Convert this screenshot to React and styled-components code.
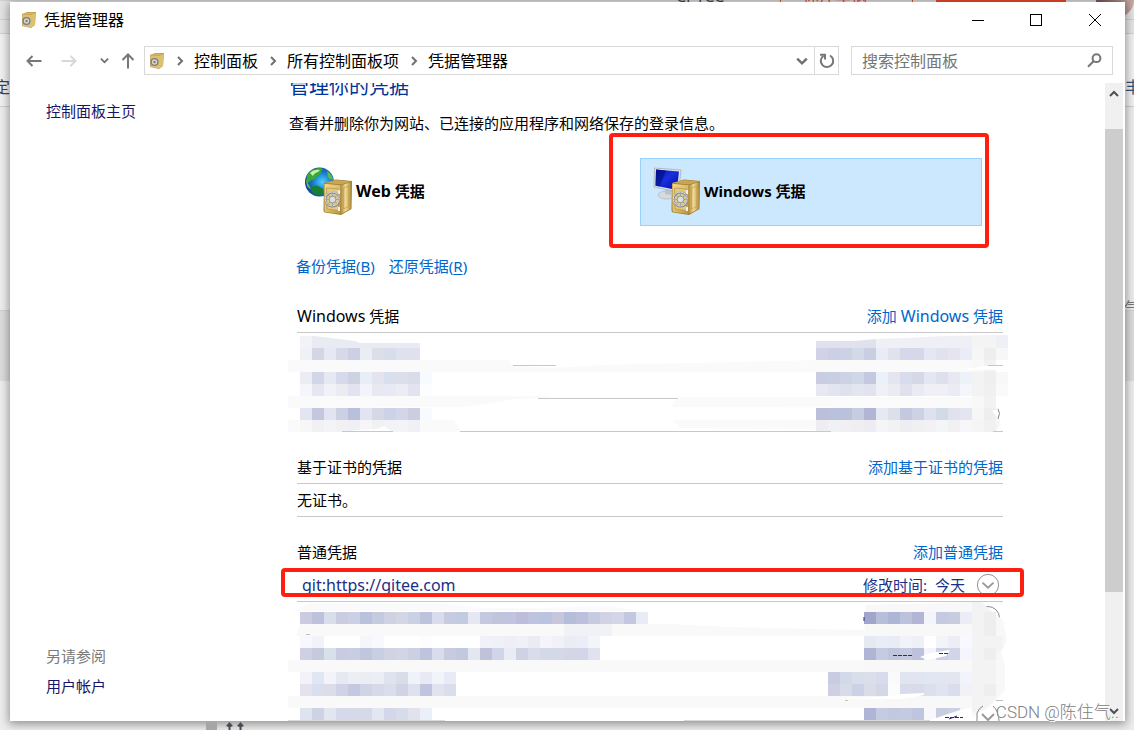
import React from 'react';
import styled, { createGlobalStyle, css } from 'styled-components';

const GlobalStyle = createGlobalStyle`
  * { box-sizing: border-box; }
  body {
    margin: 0;
    font-family: "Noto Sans", "Noto Sans CJK SC", sans-serif;
    font-size: 15px;
    line-height: 24px;
    color: #000;
  }
  button, input { font: inherit; color: inherit; }
  a { color: inherit; text-decoration: none; }
`;

/* ---------- page behind the window ---------- */

const Desktop = styled.div`
  position: relative;
  display: flex;
  height: 100vh;
  min-height: 400px;
  padding: 2px 9px 9px 10px;
  overflow: hidden;
  background: #ededed;
`;

const Behind = styled.div`
  position: absolute;
  inset: 0;
  overflow: hidden;
`;

const Strip = styled.div`
  position: absolute;
  left: 0;
  right: 0;
  top: ${(p) => p.$top}px;
  height: ${(p) => p.$height}px;
  background: ${(p) => p.$fill};
  border-top: 1px solid #d0d0d0;
`;

const BehindText = styled.span`
  position: absolute;
  top: ${(p) => p.$top}px;
  ${(p) => (p.$right !== undefined ? `right: ${p.$right}px` : `left: ${p.$left}px`)};
  color: ${(p) => p.$color || '#444'};
  font-size: 16px;
  white-space: nowrap;
`;

const Piece = styled.div`
  position: absolute;
  top: ${(p) => p.$top}px;
  left: ${(p) => p.$left}px;
  width: ${(p) => p.$width}px;
  height: ${(p) => p.$height}px;
  background: ${(p) => p.$fill};
`;

const FootMarks = styled.svg`
  position: absolute;
  left: 206px;
  bottom: 0;
`;

const Avatar = styled.div`
  position: absolute;
  top: -18px;
  right: 0;
  width: 38px;
  height: 36px;
  border-radius: 50%;
  background: linear-gradient(90deg, #6b5050, #c9aaa2);
`;

/* ---------- window ---------- */

const Window = styled.main`
  position: relative;
  flex: 1;
  min-width: 0;
  display: flex;
  flex-direction: column;
  background: #fff;
  box-shadow: 0 2px 9px 1px rgba(0, 0, 0, 0.4);
`;

const TitleBar = styled.header`
  flex: none;
  display: flex;
  align-items: center;
  height: 36px;
  padding-left: 11px;
  gap: 7px;
`;

const Title = styled.h1`
  flex: 1;
  margin: 0;
  font-size: 16px;
  font-weight: 400;
`;

const Plain = styled.button`
  display: flex;
  align-items: center;
  justify-content: center;
  padding: 0;
  border: 0;
  background: none;
  width: ${(p) => p.$width || 20}px;
  height: 27px;
`;

const WindowButtons = styled.div`
  display: flex;
`;

const NavBar = styled.nav`
  flex: none;
  display: flex;
  align-items: center;
  height: 45px;
  padding: 0 12px 0 14px;
  color: #707070;
`;

const Arrows = styled.div`
  display: flex;
  align-items: center;
  width: 120px;
  justify-content: space-between;
  padding-right: 6px;
`;

const AddressBar = styled.div`
  flex: 1;
  display: flex;
  align-items: center;
  height: 29px;
  border: 1px solid #d9d9d9;
  padding-left: 4px;
`;

const Crumbs = styled.ol`
  flex: 1;
  display: flex;
  margin: 0;
  padding: 0;
  list-style: none;
  font-size: 16px;
  color: #000;
`;

const Crumb = styled.li`
  display: flex;
  align-items: center;
  gap: 9px;
  padding-left: 10px;
`;

const Refresh = styled(Plain)`
  border-left: 1px solid #d9d9d9;
`;

const SearchBox = styled.label`
  display: flex;
  align-items: center;
  width: 262px;
  height: 29px;
  margin-left: 12px;
  padding: 0 10px;
  border: 1px solid #d9d9d9;
`;

const SearchInput = styled.input`
  flex: 1;
  min-width: 0;
  padding: 0;
  border: 0;
  outline: 0;
  background: none;
  font-size: 16px;
  &::placeholder { color: #757575; opacity: 1; }
`;

const Body = styled.div`
  flex: 1;
  min-height: 0;
  display: flex;
  overflow: hidden;
  padding-right: 2px;
`;

const Sidebar = styled.aside`
  flex: none;
  display: flex;
  flex-direction: column;
  width: 279px;
  padding: 16px 36px 23px;
  color: #15156a;
`;

const SeeAlso = styled.div`
  display: flex;
  flex-direction: column;
  gap: 6px;
  margin-top: auto;
`;

const Muted = styled.span`
  color: #7a7a7a;
`;

const Content = styled.section`
  flex: 1;
  min-width: 0;
  margin-top: -10px;
  padding-right: 102px;
`;

const Heading = styled.h2`
  margin: 0;
  font-size: 20px;
  line-height: 28px;
  font-weight: 400;
  color: #003399;
`;

const Description = styled.p`
  margin: 10px 0 23px;
`;

const Tiles = styled.div`
  display: grid;
  grid-template-columns: 1fr 1fr;
  gap: 6px;
  margin: 0 21px 0 3px;
`;

const Tile = styled.button`
  position: relative;
  display: flex;
  align-items: center;
  gap: 3px;
  height: 68px;
  padding: 0 12px 2px;
  font-weight: 700;
  border: 1px solid transparent;
  background: none;
  ${(p) => p.$selected && css`
    border-color: #99d1ff;
    background: #cce8ff;
  `}
`;

const Highlight = styled.span`
  position: absolute;
  inset: ${(p) => p.$inset};
  border: 4px solid #ff1f10;
  border-radius: 4px;
  pointer-events: none;
`;

const Actions = styled.div`
  display: flex;
  gap: 14px;
  margin: 28px 7px 22px;
`;

const Link = styled.a`
  color: #0066cc;
  u { text-underline-offset: 2px; }
`;

const Group = styled.section`
  margin: 0 0 19px 8px;
`;

const GroupHead = styled.div`
  display: flex;
  align-items: center;
  justify-content: space-between;
  height: 33px;
  border-bottom: 1px solid #c8c8c8;
`;

const GroupTitle = styled.h3`
  margin: 0;
  font-size: 15px;
  font-weight: 400;
`;

const Latin = styled.span`
  font-size: 16px;
`;

const Row = styled.div`
  position: relative;
  display: flex;
  align-items: center;
  height: 33px;
  border-bottom: 1px solid #c8c8c8;
`;

const CredentialRow = styled(Row)`
  padding: 0 3px 0 5px;
  color: #1c2f86;
`;

const CredentialName = styled.span`
  flex: 1;
  font-size: 16px;
`;

const Modified = styled.span`
  display: flex;
  gap: 8px;
  margin-right: 11px;
`;

const HiddenRows = styled.div`
  position: relative;
  height: ${(p) => p.$rows * 33}px;
`;

const Cover = styled.svg`
  position: absolute;
  top: 0;
  left: -9px;
  width: calc(100% + ${(p) => p.$extra}px);
  height: ${(p) => p.$height}px;
`;

const ScrollBar = styled.div`
  flex: none;
  display: flex;
  flex-direction: column;
  align-items: center;
  width: 18px;
  background: #f0f0f0;
`;

const ScrollTrack = styled.div`
  flex: 1;
  width: 100%;
  display: grid;
  grid-template-rows: 25fr 463fr 108fr;
`;

const Thumb = styled.div`
  grid-row: 2;
  background: #cdcdcd;
`;

const ScrollButton = styled(Plain)`
  height: 21px;
`;

const Watermark = styled.span`
  position: absolute;
  right: 15px;
  bottom: 6px;
  font-family: Roboto, "Noto Sans CJK SC", sans-serif;
  font-size: 17px;
  font-weight: 300;
  line-height: 24px;
  color: #808080;
  text-shadow: 1px 1px 0 #fff;
`;

/* ---------- icons ---------- */

const Chevron = ({ dir = 'down', size = 10, color = '#707070', weight = 2 }) => {
  const d = {
    down: 'M1 3 L5 7 L9 3',
    up: 'M1 7 L5 3 L9 7',
    right: 'M3 1 L7 5 L3 9',
  }[dir];
  return (
    <svg width={size} height={size} viewBox="0 0 10 10" fill="none" stroke={color} strokeWidth={weight}>
      <path d={d} />
    </svg>
  );
};

const Arrow = ({ dir, color }) => (
  <svg width="16" height="16" viewBox="0 0 16 16" fill="none" stroke={color} strokeWidth="2">
    <path
      d={{
        left: 'M15.500 8H1.500M6.500 3L1.500 8L6.500 13',
        right: 'M.5 8H14.500M9.500 3L14.500 8L9.500 13',
        up: 'M8 15.500V1.500M2.500 7L8 1.500L13.500 7',
      }[dir]}
    />
  </svg>
);

const Defs = () => (
  <svg width="0" height="0" style={{ position: 'absolute' }} aria-hidden="true">
    <defs>
      <linearGradient id="front" x1="0" y1="0" x2="1" y2="1">
        <stop offset="0" stopColor="#f0d98d" /><stop offset=".5" stopColor="#dcbf68" /><stop offset="1" stopColor="#b8953c" />
      </linearGradient>
      <linearGradient id="side" x1="0" y1="0" x2="1" y2="0">
        <stop offset="0" stopColor="#b48d38" /><stop offset=".45" stopColor="#f0dc98" /><stop offset="1" stopColor="#aa8634" />
      </linearGradient>
      <radialGradient id="sea" cx=".6" cy=".5" r=".6">
        <stop offset="0" stopColor="#4fd0ff" /><stop offset=".5" stopColor="#1c7fd4" /><stop offset="1" stopColor="#123c92" />
      </radialGradient>
      <linearGradient id="screen" x1="0" y1="0" x2="1" y2="1">
        <stop offset="0" stopColor="#0512a0" /><stop offset=".45" stopColor="#1830e0" /><stop offset="1" stopColor="#0008a0" />
      </linearGradient>
    </defs>
  </svg>
);

const SafeShape = () => (
  <g>
    <path d="M19 16 L31 12.500 L47 14 L46.500 42 L36 48 L20 45.500 Q18.500 45 18.500 43Z" fill="#a07d30" />
    <path d="M19.500 16 L31 13 L46.500 14.500 L36 17.500Z" fill="#c8a653" />
    <path d="M19.500 16.800 L35.500 18.200 L35.500 47 L20.500 45 Q19.500 44.500 19.500 43Z" fill="url(#front)" />
    <path d="M36 18.200 L46.300 15 L46 41.600 L36 47Z" fill="url(#side)" />
    <path d="M38.500 21 L44 19 L43.600 39.500 L38.500 42Z" fill="none" stroke="#c4a250" strokeWidth=".8" />
    <path d="M21.500 21 L33.500 22 V43.500 L22 42Z" fill="#e3c97c" stroke="#b3924a" strokeWidth=".7" />
    <path d="M34 23v4M34 40v4" stroke="#eee" strokeWidth="2" />
    <circle cx="27.500" cy="32.500" r="7" fill="#d8c890" stroke="#8b8b8b" strokeWidth="2" />
    <circle cx="27.200" cy="32" r="7" fill="none" stroke="#e5e5e5" strokeWidth=".9" />
    <path d="M27.500 25v15M20.500 32.500h14M22.500 27.500l10 10M32.500 27.500l-10 10" stroke="#a5a5a5" strokeWidth="1" />
    <circle cx="27.500" cy="32.500" r="3.300" fill="#dedede" stroke="#8a8a8a" strokeWidth=".8" />
  </g>
);

const SmallSafeIcon = () => (
  <svg width="16" height="18" viewBox="0 0 16 18">
    <path d="M1 3L6 1H15L14 14L10 17L1 15Z" fill="#c4a150" />
    <path d="M1.500 3.500L10 4V16.500L1.500 14.800Z" fill="#d9c07a" />
    <path d="M10 4L14.500 2L14 14L10 16.500Z" fill="#dcc16f" />
    <path d="M2 3L6 1.500L14 2L10 3.500Z" fill="#d5b45c" />
    <circle cx="5.500" cy="10" r="3.400" fill="#d8d5cc" stroke="#7d7d7d" strokeWidth="1.400" />
    <circle cx="5.500" cy="10" r="1.200" fill="#808080" />
  </svg>
);

const WebSafeIcon = () => (
  <svg width="48" height="48" viewBox="0 0 48 48">
    <circle cx="14.500" cy="15" r="14.500" fill="url(#sea)" />
    <path d="M2 8 Q7 1 15 1 Q20 2 16 4 Q17 7 12 9 Q10 13 6 13 Q4 17 1 15Z" fill="#3aa83a" />
    <path d="M5 6 Q9 2 15 3 L13 5 Q9 6 8 9Z" fill="#c5f2a0" />
    <path d="M22 4 Q27 7 28 13 L25 12 L23 10Z" fill="#57be43" />
    <path d="M6 20 Q12 16 18 22 L18 27 Q14 29 9 27 Q6 25 6 20Z" fill="#168034" />
    <path d="M1 13 Q4 18 6 22 Q4 22 2 19Z" fill="#67ba55" />
    <SafeShape />
  </svg>
);

const PcSafeIcon = () => (
  <svg width="48" height="48" viewBox="0 0 48 48">
    <ellipse cx="14" cy="28" rx="9" ry="4" fill="#d5dade" stroke="#a8b0b5" strokeWidth=".6" />
    <path d="M12 21 L19 22 L18 28 L12 27Z" fill="#bcc3c8" />
    <path d="M1.500 1 L28 3 L25.500 25 L1 20Z" fill="#e3e6ea" stroke="#9ca6b0" strokeWidth=".7" />
    <path d="M3 2.500 L26 4.500 L24 23 L2.500 18.800Z" fill="url(#screen)" />
    <path d="M3 2.500 L13 3.500 L7 19.600 L2.500 18.800Z" fill="#000c78" opacity=".55" />
    <SafeShape />
  </svg>
);

const ExpandIcon = () => (
  <svg width="26" height="26" viewBox="0 0 26 26" fill="none">
    <circle cx="13" cy="13" r="11.500" fill="#fff" stroke="#8a8a8a" />
    <path d="M7 10.500L13 16L19 10.500" stroke="#999" strokeWidth="2" />
  </svg>
);

/* ---------- mosaic over private entries ---------- */

const CELL = 12;

const Cells = ({ x, y, h = CELL, colors }) =>
  colors.split(' ').map((c, i) =>
    c === '-' ? null : <rect key={i} x={x + i * CELL} y={y} width={CELL} height={h} fill={`#${c}`} />
  );

const windowsCells = [
  [300, 348, 'f0f1f6 d4d6e5 e6e9f3 d7d9e7 cbd0e4 ebedf4 dedeea d7ddea dfe2ec dfe1ee'],
  [300, 372, 'ecedf3 d3d6e8 e6e9f4 d6daea cdd3e3 e8eef6 e3e4ed d8dfed dcdfe9 d9dce9 f7fbff'],
  [300, 384, 'f5f6fb e6e6f0 f1f2f8 ebecf2 e1e3f0 f3f4fa e7e8f1 e7eaf4 ecedf3 e1e4f0 fcfdfe'],
  [300, 408, 'e2e6f0 c5c7de e2e4f1 ccd0e2 b8c0dc e2e5f1 d7d8e6 ccd3e9 d3d6e7 cdcde1 f7fbff'],
  [300, 420, 'f7f7f7 f1f1f3 f4f4f6 f1f1f4 eff0f4 f6f6f8 f1f1f4 f2f3f7 f4f4f7 f1f1f5 fafafa'],
  [816, 348, 'd1d2e5 cbd0e4 cdd1e5 d3dae7 c9cfe2 e9ebf6 e2e2ec d4d8ea d5d8e8 e5e8f2 dee3ef e6e5ef e9edf7 f6f6f6 eeeeee f7f7f7'],
  [816, 372, 'cacce1 c9cfe2 cdd2e5 d0d7e7 c4c9df ecf0f8 e4e5ef d8dcec d5d9e7 e4e7f3 dee1ed e8e8f3 edf1f8 f3f3f3 efefef f8f8f8'],
  [816, 384, 'e8e8f2 e2e4ef dfe2ed e3e6ef e1e3ee f0f1f7 ebebf2 e1e1ed e9ebf3 efeff5 eff0f5 ebebf5 f5f6fb f3f3f3 f0f0f0 fafafa'],
  [816, 408, 'bcbfd9 b8c1dd bbc0db c7cde1 b1b6d5 e6e8f2 dddfea c4c9df cdd2e5 dfe2ed d2dae7 e2e2ed e3e6f1 f6f6f6 eeeeee f8f8f8'],
  [816, 420, 'ededf2 f0f1f5 efeff4 eeeef3 ececf2 f5f5f8 f2f2f5 eceef1 eff0f2 f2f2f4 f4f5f7 f1f1f4 f7f7f9 f5f5f5 f1f1f1 f6f6f6'],
];

const WindowsCover = () => (
  <Cover $extra={14} $height={99} viewBox="288 333 720 99" preserveAspectRatio="none" aria-hidden="true">
    <path d="M288 360H508L514 366L556 368L600 365L740 362L816 360H972V372H288Z" fill="#fafafa" />
    <path d="M288 396H552L545 398L515 399L464 407L288 408Z M670 407L679 397H972V408Z" fill="#fafafa" />
    <path d="M288 420H453L460 428V432H288Z M673 420H831V430L680 428Z" fill="#fafafa" />
    <path d="M300 336H314L355 341L360 343H420V348H300Z" fill="#e9ebf2" />
    <path d="M300 336H312V348H300Z" fill="#f2f3f7" />
    <path d="M816 341H855L876 339V348H816Z" fill="#e0e1ed" />
    <path d="M876 339L905 338L945 336L1008 335V348H876Z" fill="#eff0f6" />
    <path d="M972 336H996V432H972Z" fill="#f4f4f4" />
    {windowsCells.map(([x, y, c], i) => <Cells key={i} x={x} y={y} colors={c} />)}
    <path d="M972 360H984V372H972Z M972 396H984V408H972Z" fill="#f8f8f8" />
    <path d="M984 360H996V372H984Z M984 396H996V408H984Z" fill="#f2f2f2" />
    <path d="M342 432L358 430L376 429L384 426L392 432Z M965 369L984 366L1008 364V370L966 370Z M992 411L1003 408H1008V432H996L1001 422Z" fill="#fff" />
    <path d="M513 365.500H556M538 398.500H678M342 431.500H393M460 431.500H831M993 431.500H1003M988 365.500H1003" stroke="#c8c8c8" />
    <path d="M998 409Q1001 413 998 419" fill="none" stroke="#888" />
  </Cover>
);

const genericCells = [
  [300, 612, 'cacbe0 bec1dc d8dfeb cacce0 cbd0e4 b9c1dc c4cbdf d0d2e4 d4d6e4 cbd1e5 bec3dd d9dcec c7cbdf c2cbe0 e5e8f2 c5c9df c0c5dc c0c4df bdbddb bec4dd bac3df c6c7dc b5bdd8 bdc0dc c6cbe0 d1d3e5 d3d6e8 c2c8df e8ecf5'],
  [300, 636, 'f7f8fd f2f3f9 - - - f5f6fb f8f9fd - - - fdfdfd - - - - f1f2f8 f0f1f7 eeeff6 f0f1f6 ebebf4 f4f4fa f1f1f7 ebedf5 ebeef7 f4f5fa'],
  [300, 648, 'cfd1e3 c5cadf d8e0ea c9cce1 c9cde1 c1c6df c9cfe2 d1d3e5 d3d4e4 cbd0e3 bfc4de d9dcec c8cbdf c1c9df e4e7f1 c0c2dc d1d5e8 eaebf5 cfd2e4 dadcea d2d9e8 d4d8e7 d4d6e6 d3d6e8 e0e2ee'],
  [300, 672, 'f3f2f8 e1e6f3 f2f4f9 e7e9f2 eceef4 ecedf3 eceef5 dee3ef d9dce9 eff2f9 e8e9f3 f3f4f9 e8ebf5'],
  [300, 684, 'e4e2ec d8dfef dbdde9 d0d3e6 c4c8e0 d0d4e5 d5d9e8 d9deea d0d3e5 dfe1ee c0c4df e1e3ef dadded'],
  [300, 708, 'dfe2ef ced2e5 e2e6f0 d5d9e9 d5d9e8 d5d9e9 e3e7f2 d3d7e9 d8dce9 e2e2ed ebeff8'],
  [864, 612, 'a2a4ca b6bed8 aeb6d5 bec1dc b2b5d5 f4f4fb c6cae1 c8ccdf eaedf8'],
  [864, 636, 'e7e9f2 eaedf6 e9ecf5 f1f3f9 edf0f6 ffffff f3f3fa ecedf6 f8f9fe'],
  [864, 648, 'b0b4d5 c5cbe0 bfc5dd c5cae1 bdc1db f5f4fa cdd1e5 d1d5e8 f4f6fd'],
  [828, 672, 'c8cbe2 d2d9e8 dadeea d9dfeb d7dbeb fafafc e1e5ef e2e5ef e1e7f2 e2e6f1 e3e6f1 f1f4fa'],
  [828, 684, 'ced0e3 d9dbe9 cbd2e5 dadde8 d4d7e8 fcfcfc d8dbea d8dbe8 dce0ee e0e4f0 dadeec f0f2f8'],
  [864, 708, 'b0b5d5 c6cce0 c2c9df c4cbe1 c0c5de f8f8fb c8cce1 cbd0e2 eff2f8'],
];

const GenericCover = () => (
  <Cover $extra={30} $height={128} viewBox="288 602 736 128" preserveAspectRatio="none" aria-hidden="true">
    <g fill="none" stroke="#888">
      <circle cx="988" cy="618" r="11.500" />
      <circle cx="988" cy="651" r="11.500" />
    </g>
    <path d="M292 611L310 603H440L480 608H530L610 606L640 611Z" fill="#fafafa" />
    <path d="M300 624H564V636H296Z M564 624H612V636H564Z M612 624H670L730 627L865 630V636H612Z M288 660H972V672H288Z M288 696H972V708H288Z" fill="#f9f9f9" />
    <path d="M564 624H612V636H564Z" fill="#f1f2f6" />
    <path d="M865 605L970 602H980L1003 620L1007 640L1001 652L1005 665V690L990 707L966 720H864Z" fill="#f8f8f8" />
    <path d="M972 602H982L996 616V636H1003V648L996 654V698L984 709L972 712Z" fill="#f3f3f3" />
    <path d="M984 612H996V636H984Z M984 648H996V660H984Z M984 684H996V696H984Z" fill="#eeeeee" />
    {genericCells.map(([x, y, c], i) => <Cells key={i} x={x} y={y} colors={c} />)}
    <path d="M834 699L882 697L900 694L924 693V695L904 699Z M920 657L930 653L950 650L946 656L928 660Z M930 720L966 708L972 708V720Z" fill="#fff" />
    <g fill="none" stroke="#888">
      <path d="M977 722V713Q979 708 983 706M993 706Q999 711 999 722" />
      <path d="M982 714L988 720L994 714" stroke="#999" strokeWidth="2" />
    </g>
    <path d="M306 634.500H310M845 700.500H848M996 700.500H1003" stroke="#c0c0c0" />
    <path d="M893 655.500h20M939 653.500h9M864 617v4M945 717.500h18M949 719l8-3" stroke="#1c2f86" strokeDasharray="4 1" />
    <path d="M288 720H445V721H288Z M684 720H930V721H684Z" fill="#d8d9da" />
  </Cover>
);

/* ---------- page ---------- */

const crumbs = ['控制面板', '所有控制面板项', '凭据管理器'];

export default function App() {
  return (
    <Desktop>
      <GlobalStyle />
      <Defs />
      <Behind aria-hidden="true">
        <Strip $top={0} $height={19} $fill="#e3e3e3" />
        <Strip $top={19} $height={14} $fill="#e5e5e5" />
        <Strip $top={33} $height={73} $fill="#f1f1f1" />
        <Strip $top={106} $height={204} $fill="#ededed" />
        <Strip $top={310} $height={71} $fill="#dcdcdc" />
        <BehindText $left={-6} $top={75}>定</BehindText>
        <BehindText $right={-7} $top={75} $color="#31527a">丰</BehindText>
        <BehindText $right={-6} $top={296} $color="#777">气</BehindText>
        <BehindText $left={676} $top={-16}>CPTCC</BehindText>
        <BehindText $left={803} $top={-16} $color="#e3492c">你汗车祸</BehindText>
        <Piece $left={780} $top={0} $width={1} $height={2} $fill="#e3492c" />
        <Piece $left={912} $top={0} $width={1} $height={2} $fill="#e3492c" />
        <Piece $left={936} $top={0} $width={130} $height={2} $fill="#e3492c" />
        <Avatar />
      </Behind>
      <Window>
        <TitleBar>
          <SmallSafeIcon />
          <Title>凭据管理器</Title>
          <WindowButtons>
            <Plain $width={58} aria-label="最小化">
              <svg width="12" height="12"><path d="M0 6.500H12" stroke="#000" /></svg>
            </Plain>
            <Plain $width={58} aria-label="最大化">
              <svg width="12" height="12"><rect x=".5" y=".5" width="11" height="11" fill="none" stroke="#000" /></svg>
            </Plain>
            <Plain $width={60} aria-label="关闭">
              <svg width="12" height="12"><path d="M0 0L12 12M12 0L0 12" stroke="#000" /></svg>
            </Plain>
          </WindowButtons>
        </TitleBar>
        <NavBar>
          <Arrows>
            <Plain aria-label="后退"><Arrow dir="left" color="#777" /></Plain>
            <Plain $width={44} aria-label="前进"><Arrow dir="right" color="#d8d8d8" /></Plain>
            <Plain aria-label="最近的位置"><Chevron size={9} /></Plain>
            <Plain aria-label="上移"><Arrow dir="up" color="#777" /></Plain>
          </Arrows>
          <AddressBar>
            <SmallSafeIcon />
            <Crumbs>
              {crumbs.map((c) => (
                <Crumb key={c}><Chevron dir="right" /><a href="#">{c}</a></Crumb>
              ))}
            </Crumbs>
            <Plain $width={24} aria-label="展开地址"><Chevron size={12} /></Plain>
            <Refresh $width={24} aria-label="刷新">
              <svg width="16" height="16" viewBox="0 0 16 16" fill="none" stroke="#777" strokeWidth="2">
                <path d="M11 2.500A6.200 6.200 0 1 1 4.500 2.800" />
                <path d="M1 1.800H6V6.500" />
              </svg>
            </Refresh>
          </AddressBar>
          <SearchBox>
            <SearchInput type="text" placeholder="搜索控制面板" aria-label="搜索控制面板" />
            <svg width="15" height="15" viewBox="0 0 15 15" fill="none" stroke="#777" strokeWidth="2">
              <circle cx="9.500" cy="5.200" r="3.900" />
              <path d="M6.800 8L1 13.800" />
            </svg>
          </SearchBox>
        </NavBar>
        <Body>
          <Sidebar>
            <a href="#">控制面板主页</a>
            <SeeAlso>
              <Muted>另请参阅</Muted>
              <a href="#">用户帐户</a>
            </SeeAlso>
          </Sidebar>
          <Content>
            <Heading>管理你的凭据</Heading>
            <Description>查看并删除你为网站、已连接的应用程序和网络保存的登录信息。</Description>
            <Tiles>
              <Tile><WebSafeIcon /><span><Latin>Web</Latin> 凭据</span></Tile>
              <Tile $selected>
                <PcSafeIcon /><span>Windows 凭据</span>
                <Highlight $inset="-26px -8px -23px -32px" />
              </Tile>
            </Tiles>
            <Actions>
              <Link href="#">备份凭据(<u>B</u>)</Link>
              <Link href="#">还原凭据(<u>R</u>)</Link>
            </Actions>
            <Group>
              <GroupHead>
                <GroupTitle><Latin>Windows</Latin> 凭据</GroupTitle>
                <Link href="#">添加 <Latin>Windows</Latin> 凭据</Link>
              </GroupHead>
              <HiddenRows $rows={3}><WindowsCover /></HiddenRows>
            </Group>
            <Group>
              <GroupHead>
                <GroupTitle>基于证书的凭据</GroupTitle>
                <Link href="#">添加基于证书的凭据</Link>
              </GroupHead>
              <Row>无证书。</Row>
            </Group>
            <Group>
              <GroupHead>
                <GroupTitle>普通凭据</GroupTitle>
                <Link href="#">添加普通凭据</Link>
              </GroupHead>
              <CredentialRow>
                <CredentialName>git:https://gitee.com</CredentialName>
                <Modified><span>修改时间:</span><span>今天</span></Modified>
                <Plain $width={24} aria-label="展开"><ExpandIcon /></Plain>
                <Highlight $inset="-1px -21px 4px -16px" />
              </CredentialRow>
              <HiddenRows $rows={4}><GenericCover /></HiddenRows>
            </Group>
          </Content>
          <ScrollBar>
            <ScrollButton aria-label="向上滚动"><Chevron dir="up" color="#505050" /></ScrollButton>
            <ScrollTrack><Thumb /></ScrollTrack>
            <ScrollButton aria-label="向下滚动"><Chevron color="#505050" /></ScrollButton>
          </ScrollBar>
        </Body>
      </Window>
      <FootMarks width="40" height="9" viewBox="0 0 40 9" aria-hidden="true">
        <path d="M0 0H11V9H0Z" fill="#a6a6a6" />
        <path d="M23.500 1L27 5L24.500 6V9H22.500V6L20 5Z M34.500 1L38 5L35.500 6V9H33.500V6L31 5Z" fill="#4b4b58" />
      </FootMarks>
      <Watermark>CSDN @陈住气..</Watermark>
    </Desktop>
  );
}
